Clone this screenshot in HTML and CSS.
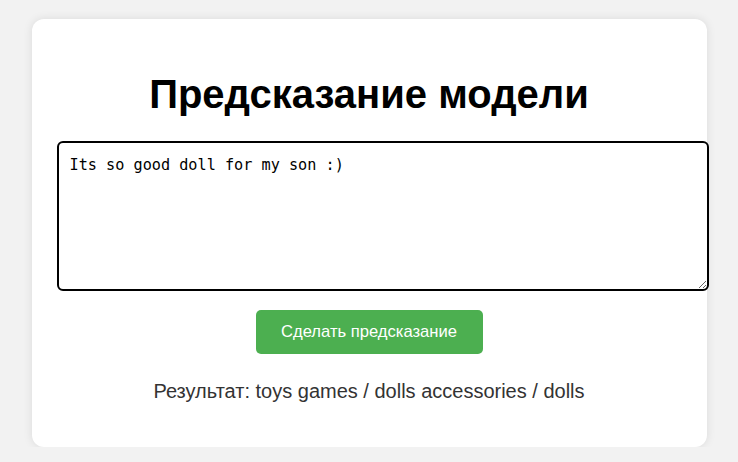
FILE: index.html
```html
<!DOCTYPE html>
<html lang="ru">
<head>
<meta charset="utf-8">
<title>Предсказание модели</title>
<link rel="stylesheet" href="styles.css">
</head>
<body>
<div class="card">
  <h1 class="title">Предсказание модели</h1>
  <textarea class="input">Its so good doll for my son :)</textarea>
  <div class="actions">
    <button class="btn">Сделать предсказание</button>
  </div>
  <p class="result">Результат: toys games / dolls accessories / dolls</p>
</div>
</body>
</html>
```

FILE: styles.css
```css
html, body {
  margin: 0;
  padding: 0;
}
body {
  background: #f2f2f2;
  font-family: "Liberation Sans", Arial, sans-serif;
  padding-top: 19px;
}
.card {
  box-sizing: border-box;
  width: 675px;
  height: 428px;
  margin: 0 auto;
  background: #fff;
  border-radius: 12px;
  box-shadow: 0 0 10px rgba(0, 0, 0, 0.1);
  padding: 52px 25px 0;
}
.title {
  margin: 0;
  font-size: 40px;
  font-weight: bold;
  text-align: center;
  color: #000;
  line-height: 46px;
}
.input {
  display: block;
  box-sizing: border-box;
  width: 652px;
  height: 150px;
  margin-top: 24px;
  border: 2px solid #000;
  border-radius: 6px;
  padding: 12px 11px 10px;
  font-family: "DejaVu Sans Mono", "Liberation Mono", monospace;
  font-size: 15.2px;
  line-height: 20px;
  color: #000;
  resize: both;
  outline: none;
}
.actions {
  display: flex;
  justify-content: center;
  margin-top: 19px;
}
.btn {
  box-sizing: border-box;
  width: 227px;
  height: 44px;
  background: #4caf50;
  color: #fff;
  border: none;
  border-radius: 5px;
  font-family: "Liberation Sans", Arial, sans-serif;
  font-size: 16.6px;
  padding: 0;
}
.result {
  margin: 26px 0 0;
  text-align: center;
  font-size: 20px;
  color: #333;
  line-height: 23px;
}
```
